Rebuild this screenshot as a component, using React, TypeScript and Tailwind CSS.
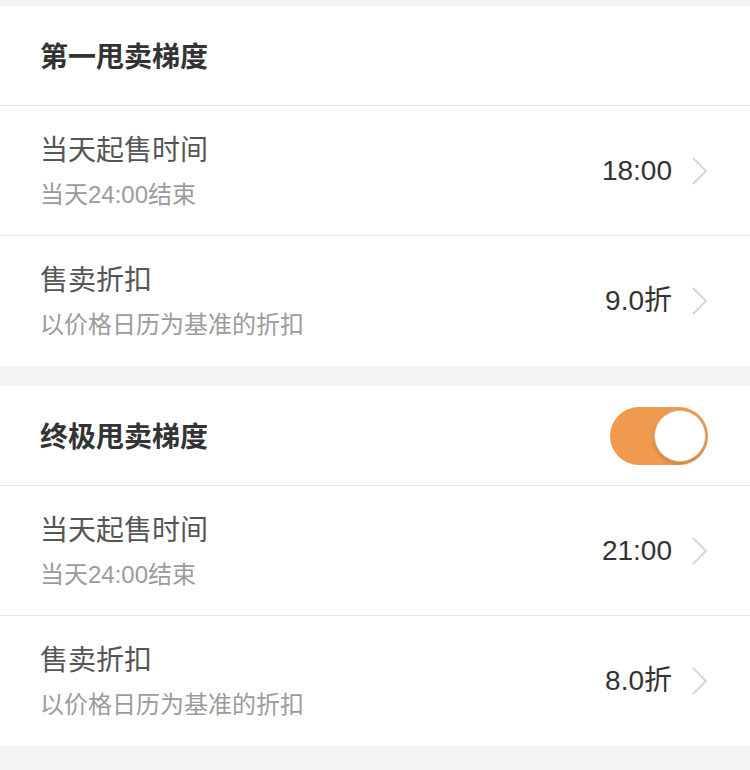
import React from 'react';

const font = { fontFamily: '"Liberation Sans", "Noto Sans CJK SC", sans-serif' };

function Chevron() {
  return (
    <svg width="16" height="28" viewBox="0 0 16 28" className="ml-[20px] shrink-0">
      <path d="M1.5 1.5 L14 14 L1.5 26.5" fill="none" stroke="#d4d4d4" strokeWidth="1.8" strokeLinecap="round" strokeLinejoin="round" />
    </svg>
  );
}

function Toggle() {
  return (
    <div className="w-[98px] h-[58px] rounded-full bg-[#ef9a4f] flex items-center justify-end pr-[2px]">
      <div className="w-[52px] h-[52px] rounded-full bg-white border border-[#e6b98c] shadow-[0_2px_4px_rgba(0,0,0,0.18)]" />
    </div>
  );
}

function Header({ title, toggle }: { title: string; toggle?: boolean }) {
  return (
    <div className="h-[100px] border-b border-[#e5e5e5] flex items-center justify-between pl-[40px] pr-[42px]">
      <span className="text-[28px] font-bold text-[#333] pt-[4px]">{title}</span>
      {toggle && <Toggle />}
    </div>
  );
}

function Row({ title, sub, value, last }: { title: string; sub: string; value: string; last?: boolean }) {
  return (
    <div className={`h-[130px] flex items-center justify-between pl-[40px] pr-[42px] ${last ? '' : 'border-b border-[#e5e5e5]'}`}>
      <div className="flex flex-col">
        <span className="text-[28px] leading-[40px] text-[#555]">{title}</span>
        <span className="text-[24px] leading-[32px] mt-[8px] text-[#9b9b9b]">{sub}</span>
      </div>
      <div className="flex items-center">
        <span className="text-[28px] text-[#333]">{value}</span>
        <Chevron />
      </div>
    </div>
  );
}

export default function App() {
  return (
    <div className="w-[750px] h-[770px] bg-[#f5f5f5] overflow-hidden pt-[6px]" style={font}>
      <div className="bg-white">
        <Header title="第一甩卖梯度" />
        <Row title="当天起售时间" sub="当天24:00结束" value="18:00" />
        <Row title="售卖折扣" sub="以价格日历为基准的折扣" value="9.0折" last />
      </div>
      <div className="h-[20px]" />
      <div className="bg-white">
        <Header title="终极甩卖梯度" toggle />
        <Row title="当天起售时间" sub="当天24:00结束" value="21:00" />
        <Row title="售卖折扣" sub="以价格日历为基准的折扣" value="8.0折" last />
      </div>
    </div>
  );
}
